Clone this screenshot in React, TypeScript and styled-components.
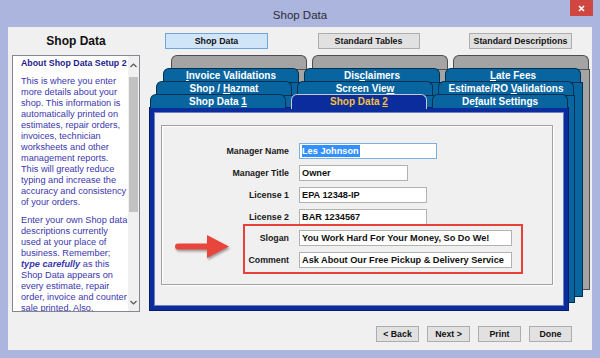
import React from 'react';
import styled, { createGlobalStyle } from 'styled-components';

const Global = createGlobalStyle`
  html, body { margin: 0; padding: 0; background: #abb5de; }
  body { font-family: "Liberation Sans", Arial, sans-serif; }
  * { box-sizing: border-box; }
`;

const Window = styled.div`
  width: 600px;
  height: 358px;
  background: #abb5de;
  display: flex;
  flex-direction: column;
  overflow: hidden;
`;

const TitleBar = styled.div`
  height: 27px;
  flex: none;
  display: grid;
  grid-template-columns: 1fr auto 1fr;
  align-items: center;
`;

const TitleText = styled.div`
  grid-column: 2;
  font-size: 11.5px;
  color: #2c2c38;
  padding-top: 2px;
`;

const CloseButton = styled.div`
  grid-column: 3;
  justify-self: end;
  align-self: start;
  width: 23px;
  height: 16px;
  margin-right: 7px;
  background: #cf4740;
  display: flex;
  align-items: center;
  justify-content: center;
`;

const Client = styled.div`
  margin: 0 8px;
  height: 323px;
  flex: none;
  background: #f0f0f0;
  display: flex;
`;

const LeftCol = styled.div`
  width: 128px;
  margin-left: 4px;
  padding-top: 7px;
  display: flex;
  flex-direction: column;
`;

const SideHeading = styled.div`
  height: 14px;
  line-height: 14px;
  font-size: 12px;
  font-weight: bold;
  text-align: center;
  color: #111;
  margin-bottom: 7px;
`;

const HelpBox = styled.div`
  height: 257px;
  border: 1px solid #828790;
  background: #fff;
  display: flex;
  overflow: hidden;
`;

const HelpText = styled.div`
  flex: 1;
  padding: 2px 0 0 8px;
  overflow: hidden;
  font-size: 9.2px;
  line-height: 11px;
  color: #3b36ad;
  white-space: nowrap;
`;

const HelpTitle = styled.div`
  font-weight: bold;
  font-size: 8.8px;
  color: #1e1c8c;
  margin-bottom: 7px;
`;

const HelpPara = styled.p`
  margin: 0 0 7px 0;
`;

const Scrollbar = styled.div`
  width: 11px;
  flex: none;
  background: #f0f0f0;
  display: flex;
  flex-direction: column;
  align-items: center;
`;

const ScrollArrow = styled.div`
  height: 18px;
  flex: none;
  width: 100%;
  display: flex;
  align-items: center;
  justify-content: center;
`;

const Thumb = styled.div`
  width: 9px;
  height: 135px;
  margin-top: 3px;
  background: #c2c2c2;
`;

const Track = styled.div`
  flex: 1;
`;

const RightCol = styled.div`
  width: 440px;
  margin-left: 10px;
  padding-top: 6px;
  display: flex;
  flex-direction: column;
`;

const TopButtons = styled.div`
  display: flex;
  justify-content: space-between;
  padding: 0 18px 0 15px;
  height: 16px;
`;

const WinButton = styled.div<{ $w: number; $active?: boolean }>`
  width: ${p => p.$w}px;
  height: 16px;
  background: ${p => (p.$active ? '#d0e5f8' : '#e1e1e1')};
  border: 1px solid ${p => (p.$active ? '#6ea6da' : '#adadad')};
  font-size: 8.8px;
  font-weight: bold;
  color: #111;
  display: flex;
  align-items: center;
  justify-content: center;
`;

const TabStack = styled.div`
  display: grid;
  margin-top: 6px;
  height: 255px;
`;

const Layer = styled.div<{ $ml: number; $mt: number; $w: number; $h: number }>`
  grid-area: 1 / 1;
  margin-left: ${p => p.$ml}px;
  margin-top: ${p => p.$mt}px;
  width: ${p => p.$w}px;
  height: ${p => p.$h}px;
  display: flex;
  flex-direction: column;
`;

const TabRow = styled.div`
  height: 14px;
  flex: none;
  display: flex;
  gap: 5px;
`;

type TabKind = 'gray' | 'blue' | 'selected';

const Tab = styled.div<{ $kind: TabKind }>`
  width: 136px;
  height: ${p => (p.$kind === 'selected' ? '15px' : '14px')};
  flex: none;
  border: 1px solid
    ${p => (p.$kind === 'gray' ? '#4f4f4f' : p.$kind === 'selected' ? '#c9c9d2' : '#00304f')};
  border-bottom: none;
  border-radius: 6px 6px 0 0;
  background: ${p => (p.$kind === 'gray' ? '#a4a4a4' : p.$kind === 'selected' ? '#0b2c9c' : '#09659f')};
  color: ${p => (p.$kind === 'selected' ? '#f2c040' : '#fff')};
  font-size: 10px;
  font-weight: bold;
  line-height: 13px;
  text-align: center;
  white-space: nowrap;
  position: relative;
  z-index: 1;
`;

const U = styled.u`
  text-underline-offset: 1px;
`;

const LayerBody = styled.div<{ $gray?: boolean }>`
  flex: 1;
  background: ${p => (p.$gray ? '#a4a4a4' : '#09659f')};
  border: 1px solid ${p => (p.$gray ? '#4f4f4f' : '#00304f')};
`;

const Panel = styled.div`
  flex: 1;
  background: #f0f0f0;
  border: 4px solid #0b2c9c;
  box-shadow: 0 0 0 1px #0a1c66, inset 0 0 0 1px #6f7fc0;
  padding: 13px 11px 21px 7px;
  display: flex;
`;

const GroupBox = styled.div`
  flex: 1;
  border: 1px solid #a0a0a0;
  box-shadow: inset 1px 1px 0 #fff, 1px 1px 0 #fff;
  padding-top: 17px;
  display: flex;
  flex-direction: column;
  gap: 6px;
`;

const FieldRow = styled.div`
  display: flex;
  align-items: center;
  gap: 10px;
  height: 16px;
`;

const Label = styled.div<{ $w: number }>`
  width: ${p => p.$w}px;
  flex: none;
  text-align: right;
  font-size: 8.8px;
  font-weight: bold;
  color: #1a1a1a;
  white-space: nowrap;
`;

const Field = styled.div<{ $w: number; $focus?: boolean }>`
  width: ${p => p.$w}px;
  height: 16px;
  flex: none;
  background: #fff;
  border: 1px solid ${p => (p.$focus ? '#7eaee0' : '#b2b2b2')};
  padding-left: 2px;
  font-size: 9.2px;
  font-weight: bold;
  color: #111;
  display: flex;
  align-items: center;
  white-space: nowrap;
`;

const Selected = styled.span`
  background: #3391ff;
  color: #fff;
  line-height: 12px;
  padding-right: 1px;
`;

const HighlightRow = styled.div`
  display: flex;
  align-items: flex-start;
  gap: 12px;
  margin-top: -7px;
  padding-left: 12px;
`;

const ArrowSvg = styled.svg`
  flex: none;
  margin-top: 10px;
  filter: drop-shadow(1px 2px 1px rgba(0, 0, 0, 0.35));
`;

const RedBox = styled.div`
  border: 2px solid #e8403a;
  padding: 4px 9px 4px 0;
  display: flex;
  flex-direction: column;
  gap: 6px;
`;

const BottomButtons = styled.div`
  display: flex;
  justify-content: flex-end;
  gap: 8px;
  padding-right: 18px;
  margin-top: 16px;
`;

const Chevron = ({ up }: { up?: boolean }) => (
  <svg width="7" height="5" viewBox="0 0 7 5">
    <polyline
      points={up ? '0.5,4 3.5,1 6.5,4' : '0.5,1 3.5,4 6.5,1'}
      fill="none"
      stroke="#555"
      strokeWidth="1.2"
    />
  </svg>
);

const Arrow = () => (
  <ArrowSvg width="57" height="25" viewBox="0 0 57 25">
    <path d="M4 9.5 H33 V1 L55 12.5 L33 24 V15.5 H4 A3 3 0 0 1 4 9.5 Z" fill="#e8463d" />
  </ArrowSvg>
);

export default function App() {
  return (
    <>
      <Global />
      <Window>
        <TitleBar>
          <TitleText>Shop Data</TitleText>
          <CloseButton>
            <svg width="7" height="7" viewBox="0 0 7 7">
              <path d="M1 1 L6 6 M6 1 L1 6" stroke="#fff" strokeWidth="1.6" />
            </svg>
          </CloseButton>
        </TitleBar>
        <Client>
          <LeftCol>
            <SideHeading>Shop Data</SideHeading>
            <HelpBox>
              <HelpText>
                <HelpTitle>About Shop Data Setup 2</HelpTitle>
                <HelpPara>
                  This is where you enter<br />
                  more details about your<br />
                  shop. This information is<br />
                  automatically printed on<br />
                  estimates, repair orders,<br />
                  invoices, technician<br />
                  worksheets and other<br />
                  management reports.<br />
                  This will greatly reduce<br />
                  typing and increase the<br />
                  accuracy and consistency<br />
                  of your orders.
                </HelpPara>
                <HelpPara>
                  Enter your own Shop data<br />
                  descriptions currently<br />
                  used at your place of<br />
                  business. Remember;<br />
                  <b><i>type carefully</i></b> as this<br />
                  Shop Data appears on<br />
                  every estimate, repair<br />
                  order, invoice and counter<br />
                  sale printed. Also,
                </HelpPara>
              </HelpText>
              <Scrollbar>
                <ScrollArrow><Chevron up /></ScrollArrow>
                <Thumb />
                <Track />
                <ScrollArrow><Chevron /></ScrollArrow>
              </Scrollbar>
            </HelpBox>
          </LeftCol>
          <RightCol>
            <TopButtons>
              <WinButton $w={103} $active>Shop Data</WinButton>
              <WinButton $w={102}>Standard Tables</WinButton>
              <WinButton $w={103}>Standard Descriptions</WinButton>
            </TopButtons>
            <TabStack>
              <Layer $ml={21} $mt={0} $w={419} $h={235}>
                <TabRow>
                  <Tab $kind="gray" />
                  <Tab $kind="gray" />
                  <Tab $kind="gray" />
                </TabRow>
                <LayerBody $gray />
              </Layer>
              <Layer $ml={13} $mt={13} $w={420} $h={229}>
                <TabRow>
                  <Tab $kind="blue"><U>I</U>nvoice Validations</Tab>
                  <Tab $kind="blue">Dis<U>c</U>laimers</Tab>
                  <Tab $kind="blue"><U>L</U>ate Fees</Tab>
                </TabRow>
                <LayerBody />
              </Layer>
              <Layer $ml={6} $mt={26} $w={419} $h={222}>
                <TabRow>
                  <Tab $kind="blue">Shop / <U>H</U>azmat</Tab>
                  <Tab $kind="blue">Screen Vie<U>w</U></Tab>
                  <Tab $kind="blue">Estimate/RO <U>V</U>alidations</Tab>
                </TabRow>
                <LayerBody />
              </Layer>
              <Layer $ml={0} $mt={39} $w={418} $h={216}>
                <TabRow>
                  <Tab $kind="blue">Shop Data <U>1</U></Tab>
                  <Tab $kind="selected">Shop Data <U>2</U></Tab>
                  <Tab $kind="blue">De<U>f</U>ault Settings</Tab>
                </TabRow>
                <Panel>
                  <GroupBox>
                    <FieldRow>
                      <Label $w={127}>Manager Name</Label>
                      <Field $w={138} $focus><Selected>Les Johnson</Selected></Field>
                    </FieldRow>
                    <FieldRow>
                      <Label $w={127}>Manager Title</Label>
                      <Field $w={109}>Owner</Field>
                    </FieldRow>
                    <FieldRow>
                      <Label $w={127}>License 1</Label>
                      <Field $w={128}>EPA 12348-IP</Field>
                    </FieldRow>
                    <FieldRow>
                      <Label $w={127}>License 2</Label>
                      <Field $w={128}>BAR 1234567</Field>
                    </FieldRow>
                    <HighlightRow>
                      <Arrow />
                      <RedBox>
                        <FieldRow>
                          <Label $w={44}>Slogan</Label>
                          <Field $w={213}>You Work Hard For Your Money, So Do We!</Field>
                        </FieldRow>
                        <FieldRow>
                          <Label $w={44}>Comment</Label>
                          <Field $w={213}>Ask About Our Free Pickup &amp; Delivery Service</Field>
                        </FieldRow>
                      </RedBox>
                    </HighlightRow>
                  </GroupBox>
                </Panel>
              </Layer>
            </TabStack>
            <BottomButtons>
              <WinButton $w={43}>&lt; Back</WinButton>
              <WinButton $w={43}>Next &gt;</WinButton>
              <WinButton $w={43}>Print</WinButton>
              <WinButton $w={43}>Done</WinButton>
            </BottomButtons>
          </RightCol>
        </Client>
      </Window>
    </>
  );
}
